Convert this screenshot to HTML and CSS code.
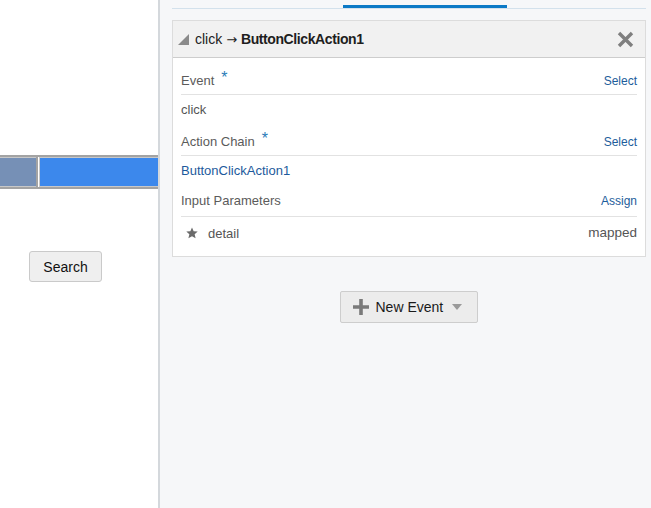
FILE: index.html
```html
<!DOCTYPE html>
<html>
<head>
<meta charset="utf-8">
<link rel="stylesheet" href="styles.css">
</head>
<body>
<div class="app">
  <div class="canvas">
    <div class="bar">
      <div class="cell cell-a"></div>
      <div class="cell-sep"></div>
      <div class="cell cell-b"></div>
    </div>
    <button class="search-btn">Search</button>
  </div>
  <div class="divider"></div>
  <div class="panel">
    <div class="tabs"><div class="tab-active"></div></div>
    <div class="card">
      <div class="card-head">
        <span class="tri"></span>
        <span class="title">click <span class="arrow">→</span> <b>ButtonClickAction1</b></span>
        <svg class="close" width="17" height="17" viewBox="0 0 17 17"><path d="M2 2L15 15M15 2L2 15" stroke="#7f7f7f" stroke-width="3.4" fill="none"/></svg>
      </div>
      <div class="card-body">
        <div class="row label-row first">
          <span class="label">Event<span class="req">*</span></span>
          <a class="link">Select</a>
        </div>
        <div class="row value-row"><span class="value">click</span></div>
        <div class="row label-row">
          <span class="label">Action Chain<span class="req">*</span></span>
          <a class="link">Select</a>
        </div>
        <div class="row value-row"><span class="value blue">ButtonClickAction1</span></div>
        <div class="row label-row">
          <span class="label">Input Parameters</span>
          <a class="link">Assign</a>
        </div>
        <div class="row param-row">
          <span class="param">
            <svg class="star" width="12" height="12" viewBox="0 0 24 24"><path d="M12 1l3.3 7.5 8.1.7-6.1 5.4 1.9 8L12 18.4l-7.2 4.2 1.9-8L.6 9.2l8.1-.7z" fill="#6b6b6b"/></svg>
            <span class="value">detail</span>
          </span>
          <span class="value mapped">mapped</span>
        </div>
      </div>
    </div>
    <div class="actions">
      <button class="new-btn">
        <svg width="16" height="16" viewBox="0 0 16 16"><path d="M8 0V16M0 8H16" stroke="#7a7a7a" stroke-width="3.6"/></svg>
        <span>New Event</span>
        <svg class="caret" width="10" height="6" viewBox="0 0 10 6"><path d="M0 0H10L5 6Z" fill="#9a9a9a"/></svg>
      </button>
    </div>
  </div>
</div>
</body>
</html>
```

FILE: styles.css
```css
* { box-sizing: border-box; }
html, body { margin: 0; padding: 0; height: 100%; }
body {
  font-family: "Helvetica Neue", "Liberation Sans", Arial, sans-serif;
  background: #fff;
  overflow: hidden;
}
.app { display: flex; width: 651px; height: 508px; }
.canvas { width: 158px; background: #fff; display: flex; flex-direction: column; }
.bar {
  margin-top: 155px;
  height: 34px;
  display: flex;
  border-top: 2px solid #a3a3a3;
  border-bottom: 2px solid #a3a3a3;
}
.cell { height: 100%; }
.cell-a { width: 36px; background: #7690b6; border-top: 1px solid #c8c8c8; border-bottom: 1px solid #c8c8c8; }
.cell-sep { width: 4px; background: #fff; border-left: 2px solid #a3a3a3; border-right: 1px solid #c8c8c8; }
.cell-b { flex: 1; background: #3c88ec; border-top: 1px solid #c8c8c8; border-bottom: 1px solid #c8c8c8; }
.search-btn {
  margin: 62px 0 0 29px;
  width: 73px; height: 31px;
  background: #efefef;
  border: 1px solid #cacaca;
  border-radius: 3px;
  font: 14px "Helvetica Neue", "Liberation Sans", Arial, sans-serif;
  color: #111;
  padding: 0;
}
.divider { width: 2px; background: #d4d8dc; }
.panel { flex: 1; background: #f6f7f9; padding: 0 5px 0 12px; display: flex; flex-direction: column; }
.tabs { height: 9px; border-bottom: 1px solid #d3e1ec; position: relative; }
.tab-active { position: absolute; left: 171px; width: 164px; top: 5px; height: 3px; background: #0b79c6; }
.card { margin-top: 11px; background: #fff; border: 1px solid #dcdcdc; }
.card-head {
  height: 37px;
  background: #f1f1f1;
  border-bottom: 1px solid #cdcdcd;
  display: flex; align-items: center;
  padding: 0 11px 0 5px;
}
.tri {
  width: 0; height: 0;
  border-style: solid;
  border-width: 0 0 11px 11px;
  border-color: transparent transparent #8a8a8a transparent;
  margin-right: 6px; margin-top: 1px;
}
.title { font-size: 14px; color: #222; flex: 1; }
.arrow { font-family: "DejaVu Sans", sans-serif; font-size: 13px; }
.title b { font-weight: bold; color: #1e1e1e; letter-spacing: -0.4px; }
.close { display: block; }
.card-body { padding: 0 8px 7px 8px; }
.row { display: flex; justify-content: space-between; align-items: baseline; }
.label-row { height: 31px; padding-top: 7px; border-bottom: 1px solid #e2e2e2; }
.label-row.first { height: 37px; padding-top: 13px; }
.value-row { height: 30px; padding-top: 7px; }
.param-row { height: 32px; align-items: center; }
.label { font-size: 13px; color: #5b5b5b; }
.req { color: #2a7cb8; font-size: 16px; margin-left: 7px; position: relative; top: -2px; }
.link { font-size: 12px; color: #1d5d9b; }
.value { font-size: 13px; color: #555; }
.value.mapped { font-size: 13.5px; margin-top: -2px; }
.value.blue { color: #1d5a9c; }
.param { display: flex; align-items: center; padding-left: 5px; }
.star { margin-right: 10px; }
.actions { display: flex; justify-content: center; margin-top: 34px; padding-right: 1px; }
.new-btn {
  width: 138px; height: 32px;
  background: #ececec;
  border: 1px solid #cdcdcd;
  border-radius: 2px;
  display: flex; align-items: center;
  padding: 0 0 0 12px;
  font: 14px "Helvetica Neue", "Liberation Sans", Arial, sans-serif;
  color: #1a1a1a;
}
.new-btn span { margin-left: 7px; }
.new-btn .caret { margin-left: 9px; }
```
